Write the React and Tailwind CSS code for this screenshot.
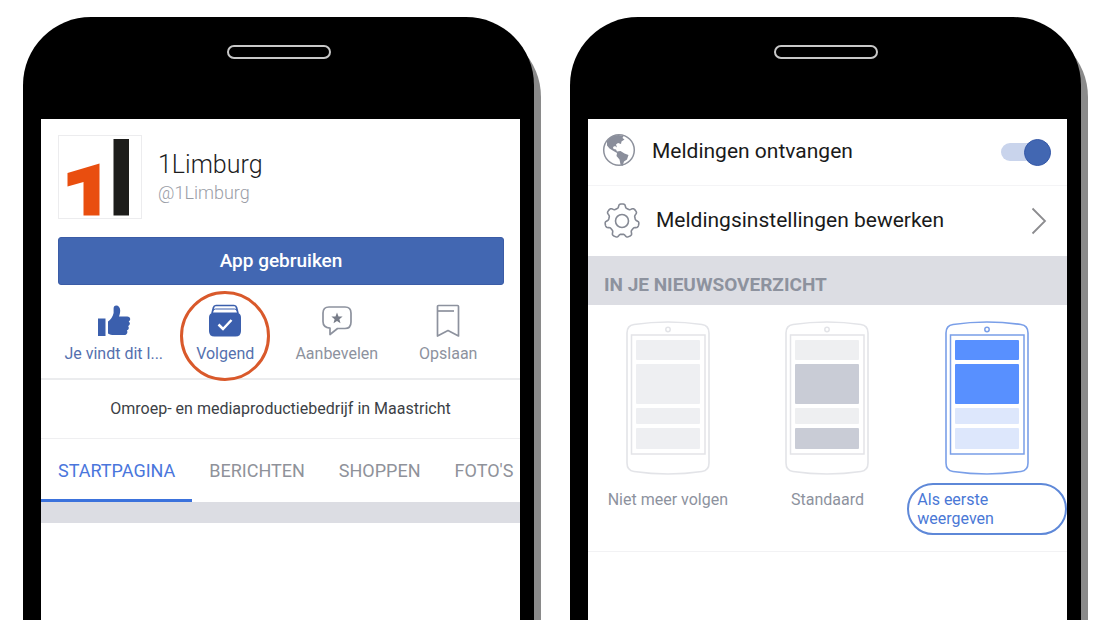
import { useState } from 'react';

const tabs = ['STARTPAGINA', 'BERICHTEN', 'SHOPPEN', "FOTO'S"];

const feedOptions = [
    {
        id: 'unfollow',
        label: 'Niet meer volgen',
        line: '#e3e4e8',
        blocks: ['#eeeff2', '#eeeff2', '#eeeff2', '#eeeff2'],
    },
    {
        id: 'default',
        label: 'Standaard',
        line: '#e3e4e8',
        blocks: ['#eeeff1', '#c9ccd6', '#eeeff1', '#c9ccd6'],
    },
    {
        id: 'first',
        label: 'Als eerste weergeven',
        line: '#7a9fe8',
        blocks: ['#5890ff', '#5890ff', '#dde7fc', '#dde7fc'],
    },
];

const LogoIcon = () => (
    <svg viewBox="0 0 82 82" className="h-[84px] w-[84px] shrink-0 border border-[#ececee]" role="img" aria-label="1Limburg logo">
        <path d="M8.500 37 40.500 27.500v52H24.500V46L8.500 50.500Z" fill="#e94e0f" />
        <path d="M54.500 3H70v76.500H54.500z" fill="#1d1d1b" />
    </svg>
);

const LikeIcon = () => (
    <svg viewBox="0 0 34 34" className="h-[34px] w-[34px]" fill="#3b5fad" aria-hidden="true">
        <path d="M1 14.500h7.500V32H1z" />
        <path d="M11 17.500c2.500-1.500 5-5 5.600-8.500V4.500c0-2 1-3 2.600-3 2.400 0 4 2 4 5 0 2.600-.6 4.300-1.200 6h8.200c1.800 0 3 1.100 3 2.600 0 1.200-.6 2-1.500 2.400.8.500 1.200 1.200 1.200 2.100 0 1.200-.8 2.200-1.900 2.500.5.500.8 1.100.8 1.900 0 1.200-.8 2.100-1.900 2.400.3.400.5.900.5 1.500 0 2-1.400 3.100-3.500 3.100H17c-2.500 0-4-.5-6-1.500Z" />
    </svg>
);

const FollowIcon = () => (
    <svg viewBox="0 0 34 34" className="h-[34px] w-[34px]" fill="none" aria-hidden="true">
        <path d="M4 9.500 5.500 3.500Q6 1.500 8 1.500H26Q28 1.500 28.500 3.500L30 9.500" stroke="#3b5fad" strokeWidth="1.700" />
        <path d="M4.500 7.500Q5 5 7.500 5h19Q29 5 29.500 7.500" stroke="#3b5fad" />
        <path d="M5 8.500h24q4 1 4 5V27q0 5.500-5.500 5.500h-21Q1 32.500 1 27V13.500q0-4 4-5Z" fill="#3b5fad" />
        <path d="m10.500 20.500 4.500 4.500 8.500-9" stroke="#fff" strokeWidth="2.500" />
    </svg>
);

const RecommendIcon = () => (
    <svg viewBox="0 0 34 34" className="h-[34px] w-[34px]" fill="none" aria-hidden="true">
        <path
            d="M9 3h16q6 0 6 6v9q0 6.500-6 6.500h-7.500L10 30.500v-6.300Q3 23.500 3 17.500V9Q3 3 9 3Z"
            stroke="#8d929e"
            strokeWidth="1.700"
            strokeLinejoin="round"
        />
        <path d="m17 8.500 1.500 3.900 4.100.2-3.200 2.600 1.100 4.100-3.500-2.300-3.500 2.300 1.100-4.100-3.200-2.600 4.100-.2Z" fill="#777c88" />
    </svg>
);

const SaveIcon = () => (
    <svg viewBox="0 0 34 34" className="h-[34px] w-[34px]" fill="none" stroke="#8d929e" strokeWidth="1.700" aria-hidden="true">
        <path d="M7.500 1.500h19q1 0 1 1V32L17 26.500 6.500 32V2.500q0-1 1-1Z" strokeLinejoin="round" />
        <path d="M7 7h16" />
    </svg>
);

const GlobeIcon = () => (
    <svg viewBox="0 0 34 34" className="-mt-1 h-[34px] w-[34px]" aria-hidden="true">
        <circle cx="17" cy="17" r="15.300" fill="#fff" stroke="#8d919c" strokeWidth="1.500" />
        <path
            d="M5 8C8 4 12 2 16.500 2l5 1-1 2 2 1.500-3 2-.5 2.500-3-1-2 1.500 1 3-2-1.500-2 1 .5 2 2.500.5 1 2 3.500-.5 4 2.500 4 1.500-1.500 4.500-3 2-1.500 4.500-2-1.500-1-5-3-3.500.5-3-3.500-2-4-2.500L5 12.500Z"
            fill="#8a8e9b"
        />
    </svg>
);

// Seven rounded teeth around the hub
const gearPoints = Array.from({ length: 168 }, (_, i) => {
    const angle = (i / 168) * Math.PI * 2;
    const r = 15.2 + 1.9 * Math.tanh(2.2 * Math.cos(angle * 7));
    return `${(18 + r * Math.sin(angle)).toFixed(2)},${(18 - r * Math.cos(angle)).toFixed(2)}`;
}).join(' ');

const GearIcon = () => (
    <svg viewBox="0 0 36 36" className="h-9 w-9" fill="none" stroke="#858994" strokeWidth="1.600" aria-hidden="true">
        <polygon points={gearPoints} strokeLinejoin="round" />
        <circle cx="18" cy="18" r="6.500" />
    </svg>
);

const ChevronIcon = () => (
    <svg viewBox="0 0 16 28" className="h-7 w-4" fill="none" stroke="#8c8c8f" strokeWidth="1.800" aria-hidden="true">
        <path d="m1.500 1.500 12.500 12.500L1.500 26.500" />
    </svg>
);

const FeedPreview = ({ line, blocks }) => (
    <svg viewBox="0 0 84 154" className="h-[154px] w-[84px]" fill="none" aria-hidden="true">
        <path
            d="M8 3.500Q42-1.500 76 3.500 83 4.500 83 12V142q0 7.500-7 8.500Q42 155.500 8 150.500 1 149.500 1 142V12Q1 4.500 8 3.500Z"
            stroke={line}
            strokeWidth="1.600"
        />
        <circle cx="42" cy="8.500" r="2.200" stroke={line} strokeWidth="1.500" />
        <path d="M5.500 14h73.500v119H5.500z" stroke={line} strokeWidth="1.500" />
        <rect x="10" y="19" width="64" height="20" rx="1" fill={blocks[0]} />
        <rect x="10" y="43" width="64" height="40" rx="1" fill={blocks[1]} />
        <rect x="10" y="87" width="64" height="16" rx="1" fill={blocks[2]} />
        <rect x="10" y="107" width="64" height="21" rx="1" fill={blocks[3]} />
    </svg>
);

const Phone = ({ children }) => (
    <div className="flex min-w-0 flex-col rounded-t-[68px] bg-black shadow-[7px_12px_0_#8a8a8a]">
        <div className="flex h-[102px] justify-center pt-7">
            <div className="h-[14px] w-[104px] rounded-full border-2 border-[#c8c8c8]" />
        </div>
        <div className="mr-[14px] ml-[18px] min-w-0 grow overflow-hidden bg-white">{children}</div>
    </div>
);

const PageAction = ({ icon, label, active }) => (
    <button className="relative flex flex-col items-center gap-1">
        {icon}
        <span className={active ? 'text-base leading-6 whitespace-nowrap text-[#5470ae]' : 'text-base leading-6 whitespace-nowrap text-[#8d929e]'}>
            {label}
        </span>
        {label === 'Volgend' && (
            <span className="absolute -top-[13px] left-1/2 h-[90px] w-[90px] -translate-x-1/2 rounded-full border-[3px] border-[#d9592b]" />
        )}
    </button>
);

const PageScreen = () => {
    const [activeTab, setActiveTab] = useState('STARTPAGINA');

    return (
        <Phone>
            <div className="pr-4 pl-[17px]">
                <div className="flex items-center gap-4 pt-4">
                    <LogoIcon />
                    <div>
                        <h1 className="text-[25px] leading-8 font-light text-[#1c1c1e]">1Limburg</h1>
                        <p className="text-lg leading-6 font-light text-[#9a9da6]">@1Limburg</p>
                    </div>
                </div>
                <button className="mt-[18px] h-12 w-full rounded-[3px] border border-[#3b5ca6] bg-[#4267b2] text-[19px] font-medium text-white">
                    App gebruiken
                </button>
                <div className="grid grid-cols-4 pt-[19px] pb-3">
                    <PageAction icon={<LikeIcon />} label="Je vindt dit l..." active />
                    <PageAction icon={<FollowIcon />} label="Volgend" active />
                    <PageAction icon={<RecommendIcon />} label="Aanbevelen" />
                    <PageAction icon={<SaveIcon />} label="Opslaan" />
                </div>
            </div>
            <p className="border-t-2 border-b border-t-[#ebecee] border-b-[#efeff1] py-[17px] text-center text-base leading-6 text-[#3c3f46]">
                Omroep- en mediaproductiebedrijf in Maastricht
            </p>
            <div className="flex">
                {tabs.map((tab) => (
                    <button
                        key={tab}
                        onClick={() => setActiveTab(tab)}
                        className={
                            tab === activeTab
                                ? 'h-[63px] border-b-[3px] border-[#3b72dc] px-[17px] pt-1 text-lg whitespace-nowrap text-[#4a76dc]'
                                : 'h-[63px] border-b-[3px] border-transparent px-[17px] pt-1 text-lg whitespace-nowrap text-[#8f929a]'
                        }
                    >
                        {tab}
                    </button>
                ))}
            </div>
            <div className="h-[21px] bg-[#dcdde3]" />
        </Phone>
    );
};

const SettingsScreen = () => {
    const [notify, setNotify] = useState(true);
    const [feed, setFeed] = useState('first');

    return (
        <Phone>
            <label className="flex h-[67px] items-center border-b border-[#f4f4f6] pr-4 pl-[14px]">
                <GlobeIcon />
                <span className="ml-4 grow text-[21px] text-[#1a1a1a]">Meldingen ontvangen</span>
                <input type="checkbox" className="peer sr-only" checked={notify} onChange={(e) => setNotify(e.target.checked)} />
                <span className="flex h-[18px] w-[50px] items-center rounded-full bg-[#c9d4ec] peer-checked:justify-end">
                    <span className="h-[27px] w-[27px] rounded-full border border-[#3558a8] bg-[#4267b2]" />
                </span>
            </label>
            <button className="flex h-[70px] w-full items-center pr-5 pl-4 text-left">
                <GearIcon />
                <span className="ml-4 grow text-[21px] text-[#1a1a1a]">Meldingsinstellingen bewerken</span>
                <ChevronIcon />
            </button>
            <fieldset>
                <legend className="h-[49px] w-full bg-[#dcdde3] pt-[17px] pl-4 text-[19px] leading-6 font-bold text-[#8d929e]">
                    IN JE NIEUWSOVERZICHT
                </legend>
                <div className="grid grid-cols-3 border-b border-[#f2f2f4] pt-4 pb-4">
                    {feedOptions.map((option) => (
                        <label key={option.id} className="flex flex-col items-center">
                            <input
                                type="radio"
                                name="feed"
                                className="sr-only"
                                checked={feed === option.id}
                                onChange={() => setFeed(option.id)}
                            />
                            <FeedPreview line={option.line} blocks={option.blocks} />
                            <span
                                className={
                                    feed === option.id
                                        ? 'mt-2 w-full rounded-full border-2 border-[#5e88d8] py-[5px] pr-12 pl-2 text-base leading-[19px] text-[#4a78d6]'
                                        : 'mt-2 border-2 border-transparent py-[5px] text-base leading-[19px] text-[#8d929e]'
                                }
                            >
                                {option.label}
                            </span>
                        </label>
                    ))}
                </div>
            </fieldset>
        </Phone>
    );
};

const App = () => (
    <main className="grid min-h-screen grid-cols-2 gap-9 overflow-hidden bg-white px-[23px] pt-[17px] font-['Roboto','Liberation_Sans',sans-serif]">
        <PageScreen />
        <SettingsScreen />
    </main>
);

export default App;
